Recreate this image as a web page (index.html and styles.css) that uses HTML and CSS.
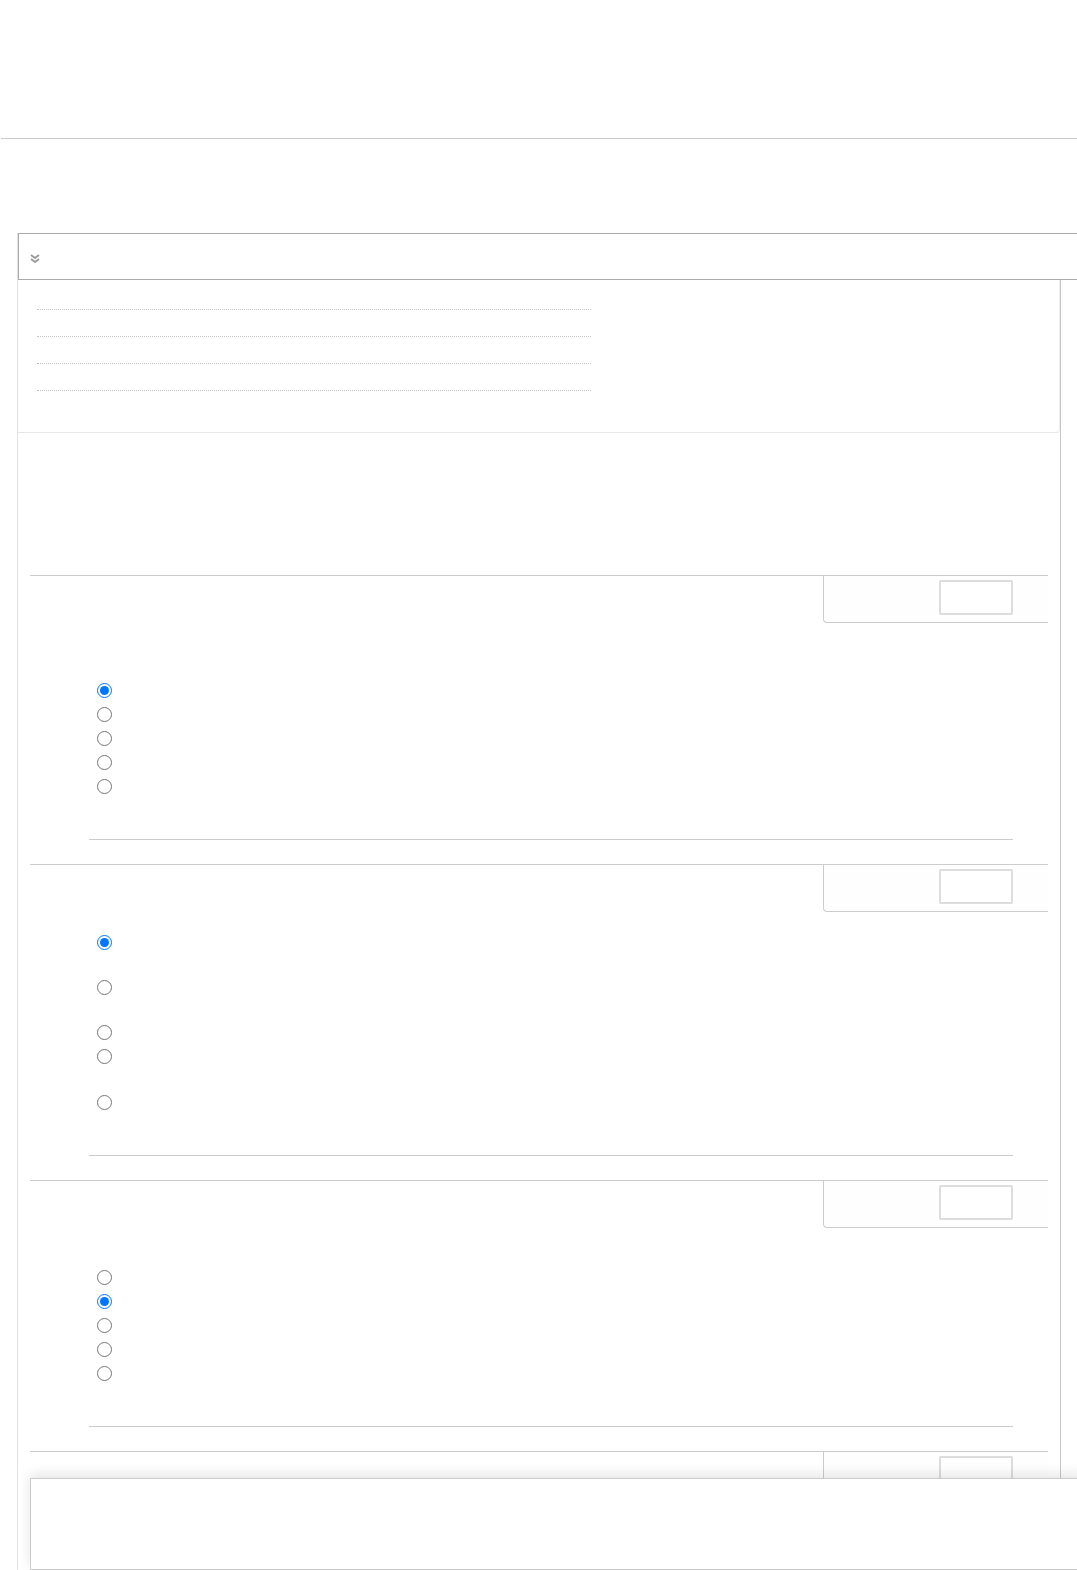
FILE: index.html
```html
<!DOCTYPE html>
<html lang="en">
<head>
  <meta charset="UTF-8" />
  <meta name="viewport" content="width=device-width, initial-scale=1.0"/>
  <title>Quiz</title>
  <link rel="stylesheet" href="styles.css">
</head>
<body>

<div class="topbar"></div>

<div class="panel">
  <div class="panel-head">
    <svg class="chevron" width="10" height="9" viewBox="0 0 10 9">
      <path d="M1 1l4 3 4-3M1 5l4 3 4-3" fill="none" stroke="#9a9a9a" stroke-width="1.9"/>
    </svg>
  </div>

  <!-- contents -->
  <ul class="toc">
    <li></li>
    <li></li>
    <li></li>
    <li></li>
  </ul>

  <!-- questions -->
  <div class="questions">

    <div class="que">
      <div class="que-info"><div class="grade-box"></div></div>
      <div class="que-content">
        <div class="qtext qtext-lg"></div>
        <div class="answer">
          <label class="option"><input type="radio" name="q1" checked></label>
          <label class="option"><input type="radio" name="q1"></label>
          <label class="option"><input type="radio" name="q1"></label>
          <label class="option"><input type="radio" name="q1"></label>
          <label class="option"><input type="radio" name="q1"></label>
        </div>
        <div class="que-sep"></div>
      </div>
    </div>

    <div class="que">
      <div class="que-info"><div class="grade-box"></div></div>
      <div class="que-content">
        <div class="qtext qtext-sm"></div>
        <div class="answer">
          <label class="option tall"><input type="radio" name="q2" checked></label>
          <label class="option tall"><input type="radio" name="q2"></label>
          <label class="option"><input type="radio" name="q2"></label>
          <label class="option taller"><input type="radio" name="q2"></label>
          <label class="option"><input type="radio" name="q2"></label>
        </div>
        <div class="que-sep"></div>
      </div>
    </div>

    <div class="que">
      <div class="que-info"><div class="grade-box"></div></div>
      <div class="que-content">
        <div class="qtext qtext-md"></div>
        <div class="answer">
          <label class="option"><input type="radio" name="q3"></label>
          <label class="option"><input type="radio" name="q3" checked></label>
          <label class="option"><input type="radio" name="q3"></label>
          <label class="option"><input type="radio" name="q3"></label>
          <label class="option"><input type="radio" name="q3"></label>
        </div>
        <div class="que-sep"></div>
      </div>
    </div>

    <div class="que">
      <div class="que-info"><div class="grade-box"></div></div>
      <div class="que-content">
        <div class="qtext qtext-lg"></div>
        <div class="answer">
          <label class="option"><input type="radio" name="q4"></label>
          <label class="option"><input type="radio" name="q4"></label>
          <label class="option"><input type="radio" name="q4"></label>
          <label class="option"><input type="radio" name="q4"></label>
        </div>
        <div class="que-sep"></div>
      </div>
    </div>

  </div>
</div>

<div class="bottom-bar"></div>

</body>
</html>
```

FILE: styles.css
```css
html, body { margin: 0; overflow: hidden; }
body { font-family: "Liberation Sans", Arial, sans-serif; background: #fff; color: #333; }

.topbar { height: 138px; margin-left: 1px; border-bottom: 1px solid #ccc; }

.panel { width: 1044px; box-sizing: border-box; margin: 94px 0 0 17px; padding-bottom: 24px; border-left: 1px solid #e2e2e2; border-right: 1px solid #c8c8c8; }
.panel-head { position: relative; height: 47px; box-sizing: border-box; margin-right: -40px; padding: 4px 0 0 11px; display: flex; align-items: center; background: #fff; border: 1px solid #aaa; border-right: none; }
.chevron { display: block; }

.toc { list-style: none; margin: 0; padding: 3px 0 41px 19px; border-right: 1px solid #ececec; border-bottom: 1px solid #e6e6e6; border-bottom-right-radius: 4px; }
.toc li { width: 554px; height: 26px; border-bottom: 1px dotted #c4c4c4; }

.questions { padding: 142px 12px 0; }
.que { border-top: 1px solid #ccc; margin-bottom: 24px; }
.que-info { float: right; width: 225px; height: 47px; box-sizing: border-box; padding-top: 4px; background: #fefefe; border-left: 1px solid #ccc; border-bottom: 1px solid #ccc; border-bottom-left-radius: 4px; }
.grade-box { width: 74px; height: 35px; box-sizing: border-box; margin-left: 115px; border: 2px solid #ddd; border-radius: 2px; background: #fff; }

.que-content { padding-left: 59px; }
.qtext-lg { height: 102px; }
.qtext-md { height: 84px; }
.qtext-sm { height: 65px; }

.answer { padding-left: 8px; }
.option { display: flex; align-items: flex-start; height: 24px; }
.option.tall { height: 45px; }
.option.taller { height: 46px; }
.option input { width: 15px; height: 15px; margin: 5px 0 0 0; }

.que-sep { margin: 41px 35px 0 0; border-top: 1px solid #ccc; }

.bottom-bar { position: fixed; left: 30px; right: -10px; bottom: 0; height: 92px; box-sizing: border-box; background: #fff; border: 1px solid #ccc; border-right: none; box-shadow: 0 -4px 12px rgba(0,0,0,0.1); }
```
